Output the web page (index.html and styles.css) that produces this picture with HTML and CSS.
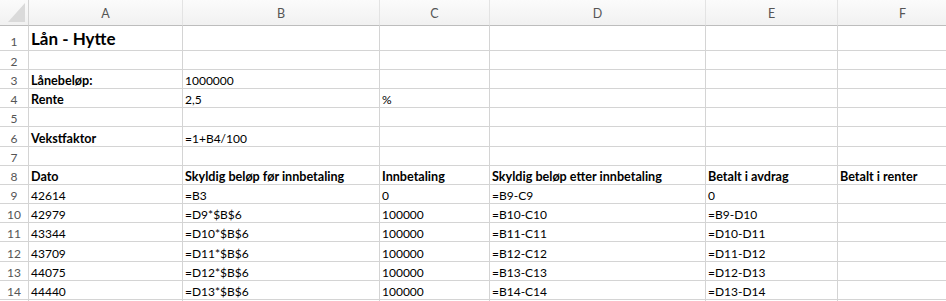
FILE: index.html
```html
<!DOCTYPE html>
<html lang="no">
<head>
<meta charset="utf-8">
<title>Lån - Hytte</title>
<link rel="stylesheet" href="styles.css">
</head>
<body>
<div class="sheet">
  <!-- column headings -->
  <div class="corner"><svg width="28" height="25" viewBox="0 0 28 25"><polygon points="25,3 25,22 8,22" fill="#dadada"/></svg></div>
  <div class="col-head">A</div>
  <div class="col-head">B</div>
  <div class="col-head">C</div>
  <div class="col-head">D</div>
  <div class="col-head">E</div>
  <div class="col-head">F</div>

  <div class="row-head tall">1</div>
  <div class="cell tall title">Lån - Hytte</div>
  <div class="cell tall"></div><div class="cell tall"></div><div class="cell tall"></div><div class="cell tall"></div><div class="cell tall"></div>

  <div class="row-head">2</div>
  <div class="cell"></div><div class="cell"></div><div class="cell"></div><div class="cell"></div><div class="cell"></div><div class="cell"></div>

  <div class="row-head">3</div>
  <div class="cell b">Lånebeløp:</div>
  <div class="cell">1000000</div>
  <div class="cell"></div><div class="cell"></div><div class="cell"></div><div class="cell"></div>

  <div class="row-head">4</div>
  <div class="cell b">Rente</div>
  <div class="cell">2,5</div>
  <div class="cell">%</div>
  <div class="cell"></div><div class="cell"></div><div class="cell"></div>

  <div class="row-head">5</div>
  <div class="cell"></div><div class="cell"></div><div class="cell"></div><div class="cell"></div><div class="cell"></div><div class="cell"></div>

  <div class="row-head">6</div>
  <div class="cell b">Vekstfaktor</div>
  <div class="cell">=1+B4/100</div>
  <div class="cell"></div><div class="cell"></div><div class="cell"></div><div class="cell"></div>

  <div class="row-head">7</div>
  <div class="cell"></div><div class="cell"></div><div class="cell"></div><div class="cell"></div><div class="cell"></div><div class="cell"></div>

  <div class="row-head">8</div>
  <div class="cell b">Dato</div>
  <div class="cell b">Skyldig beløp før innbetaling</div>
  <div class="cell b">Innbetaling</div>
  <div class="cell b">Skyldig beløp etter innbetaling</div>
  <div class="cell b">Betalt i avdrag</div>
  <div class="cell b">Betalt i renter</div>

  <div class="row-head">9</div>
  <div class="cell">42614</div>
  <div class="cell">=B3</div>
  <div class="cell">0</div>
  <div class="cell">=B9-C9</div>
  <div class="cell">0</div>
  <div class="cell"></div>

  <div class="row-head">10</div>
  <div class="cell">42979</div>
  <div class="cell">=D9*$B$6</div>
  <div class="cell">100000</div>
  <div class="cell">=B10-C10</div>
  <div class="cell">=B9-D10</div>
  <div class="cell"></div>

  <div class="row-head">11</div>
  <div class="cell">43344</div>
  <div class="cell">=D10*$B$6</div>
  <div class="cell">100000</div>
  <div class="cell">=B11-C11</div>
  <div class="cell">=D10-D11</div>
  <div class="cell"></div>

  <div class="row-head">12</div>
  <div class="cell">43709</div>
  <div class="cell">=D11*$B$6</div>
  <div class="cell">100000</div>
  <div class="cell">=B12-C12</div>
  <div class="cell">=D11-D12</div>
  <div class="cell"></div>

  <div class="row-head">13</div>
  <div class="cell">44075</div>
  <div class="cell">=D12*$B$6</div>
  <div class="cell">100000</div>
  <div class="cell">=B13-C13</div>
  <div class="cell">=D12-D13</div>
  <div class="cell"></div>

  <div class="row-head">14</div>
  <div class="cell">44440</div>
  <div class="cell">=D13*$B$6</div>
  <div class="cell">100000</div>
  <div class="cell">=B14-C14</div>
  <div class="cell">=D13-D14</div>
  <div class="cell"></div>

  <!-- next row, only its top edge is in view -->
  <div class="row-head"></div>
  <div class="cell"></div><div class="cell"></div><div class="cell"></div><div class="cell"></div><div class="cell"></div><div class="cell"></div>
</div>
</body>
</html>
```
FILE: styles.css
```css
html, body {
  margin: 0;
  background: #fff;
  overflow: hidden;
}

body {
  font-family: Lato, "Liberation Sans", sans-serif;
  color: #000;
}

/* worksheet grid: row-number column + columns A..F */
.sheet {
  display: grid;
  grid-template-columns: 29px 154px 197px 110px 216px 132px 130px;
  grid-template-rows: 26px 25px 19px repeat(12, 19.1667px) 19px;
  width: max-content;
}

.corner,
.col-head {
  background: linear-gradient(#fbfbfb, #f1f1f1);
  border-bottom: 1px solid #bdbdbd;
}

.corner {
  border-right: 1px solid #d4d4d4;
  display: flex;
}

.col-head {
  border-right: 1px solid #e3e3e3;
  display: flex;
  align-items: center;
  justify-content: center;
  font-size: 12.5px;
  color: #555;
  padding-top: 1px;
}

.row-head {
  border-right: 1px solid #d4d4d4;
  border-bottom: 1px solid #d4d4d4;
  display: flex;
  align-items: flex-end;
  justify-content: center;
  font-size: 12px;
  line-height: 15px;
  color: #555;
}

.cell {
  border-right: 1px solid #d4d4d4;
  border-bottom: 1px solid #d4d4d4;
  display: flex;
  align-items: flex-end;
  padding-left: 2px;
  font-size: 12px;
  line-height: 15px;
  white-space: nowrap;
  overflow: visible;
}

.b {
  font-size: 12.6px;
  font-weight: 700;
}

.title {
  font-size: 17px;
  font-weight: 700;
  line-height: 20px;
  padding-bottom: 1px;
}

.row-head.tall {
  padding-bottom: 1px;
}
```
